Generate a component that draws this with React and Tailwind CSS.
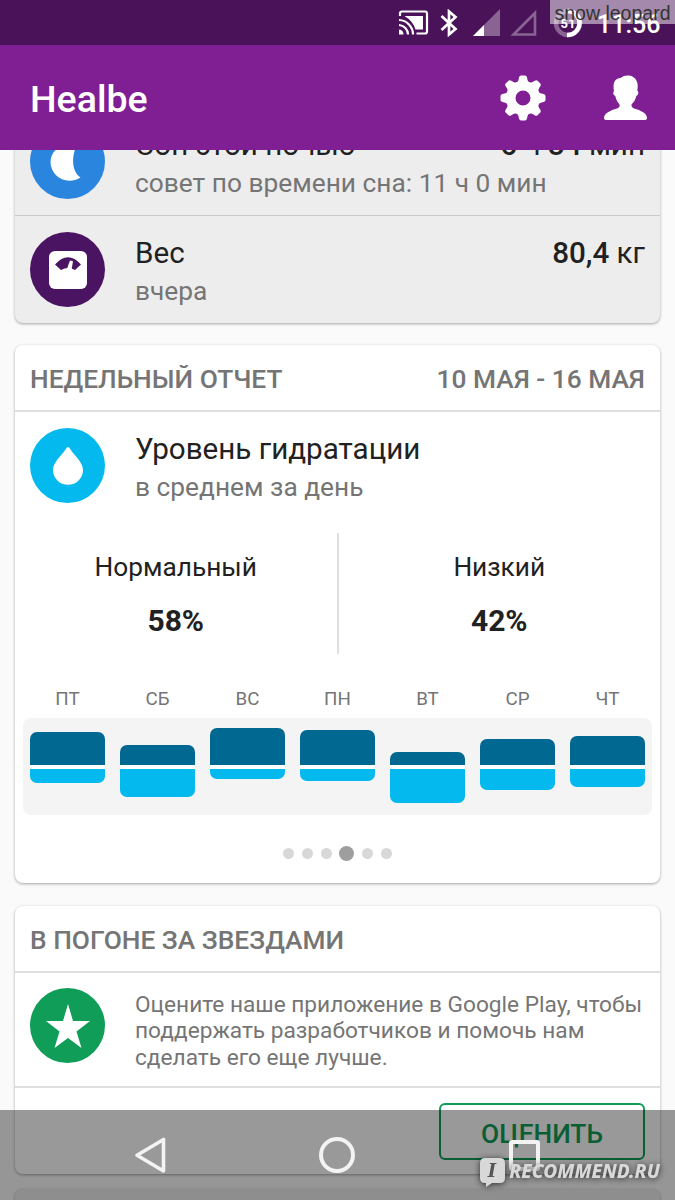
import React from "react";

const days = [
    {name: "ПТ", top: 33, bottom: 14},
    {name: "СБ", top: 20, bottom: 28},
    {name: "ВС", top: 37, bottom: 10},
    {name: "ПН", top: 35, bottom: 12},
    {name: "ВТ", top: 13, bottom: 34},
    {name: "СР", top: 26, bottom: 21},
    {name: "ЧТ", top: 29, bottom: 18},
]

const StatusBar = () => (
    <div className="relative h-[45px] shrink-0 bg-[#4a1259] flex items-center text-white">
        {/* cast */}
        <svg className="ml-[398px] w-[31px] h-[27px] shrink-0" viewBox="0 0 31 27" fill="none" stroke="currentColor" strokeWidth="2.2">
            <path d="M2 7V4.500Q2 2.500 4 2.500H27Q29 2.500 29 4.500V22.500Q29 24.500 27 24.500H18.500"/>
            <path d="M7 7h18v13.500h-7.500C15.500 14.500 12 10 7 7.500z" fill="currentColor" stroke="none"/>
            <path d="M1 11A14.500 14.500 0 0 1 15 25.500M1 16A9.500 9.500 0 0 1 10 25.500"/>
            <path d="M1 20.500A5 5 0 0 1 5.500 25.500H1z" fill="currentColor" stroke="none"/>
        </svg>
        {/* bluetooth */}
        <svg className="ml-[11px] w-[18px] h-[28px] shrink-0" viewBox="0 0 18 28" fill="none" stroke="currentColor" strokeWidth="2.7">
            <path d="M1.500 7l14 13L9 25.500v-23L15.500 8l-14 13"/>
        </svg>
        <svg className="ml-[15px] w-[28px] h-[28px] shrink-0" viewBox="0 0 28 28">
            <path d="M27 0v27H0z" fill="#fff" fillOpacity=".35"/>
            <path d="M11 16v11H0z" fill="#fff"/>
        </svg>
        <svg className="ml-[8px] w-[28px] h-[28px] shrink-0" viewBox="0 0 28 28">
            <path d="M26 4v21.500H4.500z" fill="none" stroke="#fff" strokeOpacity=".35" strokeWidth="2.600"/>
        </svg>
        <svg className="ml-[16px] w-[30px] h-[30px] shrink-0" viewBox="0 0 30 30">
            <circle cx="15" cy="15" r="12" fill="none" stroke="#fff" strokeOpacity=".35" strokeWidth="4.500"/>
            <path d="M15 3a12 12 0 1 1-1 24" fill="none" stroke="#fff" strokeWidth="4.500"/>
            <text x="15" y="20" textAnchor="middle" fontSize="13" fontWeight="700" fill="#fff">51</text>
        </svg>
        <span className="ml-[14px] mt-1 text-[25px] font-medium leading-8 whitespace-nowrap">11:56</span>
        {/* user name label */}
        <div className="absolute right-0 top-0 w-[125px] h-6 bg-white/50 text-[#333] text-[19.500px] leading-[26px] text-center whitespace-nowrap font-['Liberation_Sans',sans-serif]">
            snow leopard
        </div>
    </div>
)

const AppBar = () => (
    <div className="h-[105px] shrink-0 bg-[#7f1f93] flex items-center text-white pl-[30px]">
        <h1 className="flex-1 pt-0.5 text-[37.500px] font-medium leading-[44px]">Healbe</h1>
        <svg className="w-[46px] h-[46px]" viewBox="-23 -23 46 46" fill="currentColor">
            <path fillRule="evenodd" d="M-17 0a17 17 0 1 0 34 0a17 17 0 1 0-34 0zM-7.500 0a7.500 7.500 0 1 1 15 0a7.500 7.500 0 1 1-15 0z"/>
            {[0, 45, 90, 135, 180, 225, 270, 315].map(a => (
                <path key={a} transform={`rotate(${a})`} d="M-7.500-14.500Q-4.500-16-4-20.500Q-3.500-22.500-2-22.500H2Q3.500-22.500 4-20.500Q4.500-16 7.500-14.500z"/>
            ))}
        </svg>
        <svg className="ml-[57px] mr-[27px] w-[45px] h-[46px]" viewBox="0 0 45 46" fill="currentColor">
            <path d="M1 43C1 38 8 35.500 12.500 34Q17.500 32.500 16.500 29.500C14.500 27 13 24.500 12.300 21C10 20 9.600 17.500 11 16C9.500 8 12 3 17.500 3C20 .8 23 .2 26 .5C33 1.500 36 7.500 34.300 15.500C36 17 35.500 20 33.300 21C32.500 24.500 31 27 28.500 29.500Q28 32.500 32.500 34C37.500 35.500 44 38 44 43Q44 45 42 45H3Q1 45 1 43z"/>
        </svg>
    </div>
)

const Row = ({color, icon, title, subtitle, value}) => (
    <div className="flex h-[107px] px-[15px] pt-4">
        <div className={"size-[75px] shrink-0 rounded-full flex items-center justify-center " + color}>{icon}</div>
        <div className="ml-[30px] mt-[3px] flex-1 whitespace-nowrap">
            <div className="flex justify-between text-[29.600px] leading-9 text-[#212121]">
                <span>{title}</span>
                <span>{value}</span>
            </div>
            <div className="mt-1 text-[26.300px] leading-8 text-[#757575]">{subtitle}</div>
        </div>
    </div>
)

const CardHeader = ({title, right}) => (
    <div className="flex h-[67px] items-center justify-between border-b-2 border-[#dfdfdf] px-[15px] pt-0.5 text-[26.300px] font-medium leading-8 text-[#757575] whitespace-nowrap">
        <span>{title}</span>
        <span>{right}</span>
    </div>
)

const Stat = ({label, value}) => (
    <div className="flex-1 text-center text-[#212121]">
        <div className="mt-[18px] text-[26.250px] leading-8">{label}</div>
        <div className="mt-5 text-[30px] font-bold leading-9">{value}</div>
    </div>
)

const NavBar = () => (
    <div className="absolute inset-x-0 bottom-0 h-[90px] bg-black/40 flex items-center text-[#f3f3f3]">
        <svg className="ml-[134px] w-8 h-[37px]" viewBox="0 0 32 37" fill="none" stroke="currentColor" strokeWidth="3.600" strokeLinejoin="round">
            <path d="M29.500 2.500v31.500L3 18.200z"/>
        </svg>
        <div className="ml-[153px] size-9 rounded-full border-4 border-current"></div>
        <div className="ml-[154px] size-[31px] rounded-[3px] border-4 border-current"></div>
        {/* site logo */}
        <div className="absolute right-[15px] bottom-3 flex items-center text-[#d8d8d8] drop-shadow-[0_1px_3px_rgba(0,0,0,0.7)]">
            <svg className="w-[27px] h-[31px]" viewBox="0 0 27 31">
                <path d="M6 1h15q5 0 5 5v15q0 5-5 5h-8l-6 4v-4H6q-5 0-5-5V6q0-5 5-5z" fill="currentColor"/>
                <text x="13" y="20" textAnchor="middle" fontSize="18" fontWeight="700" fontStyle="italic" fontFamily="DejaVu Serif" fill="#555">I</text>
            </svg>
            <span className="ml-[3px] mb-[3px] text-[19.100px] leading-6 font-extrabold italic whitespace-nowrap font-['Noto_Sans',sans-serif]">RECOMMEND.RU</span>
        </div>
    </div>
)

const MoonIcon = () => (
    <svg className="w-[38px] h-[40px]" viewBox="0 0 38 40">
        <path d="M28 1.500C12 0 1.500 9 1.500 20C1.500 34 17 44 31.500 35.500C25 31 20.500 20 28 1.500z" fill="#fff"/>
    </svg>
)

const ScaleIcon = () => (
    <svg className="w-[38px] h-[38px]" viewBox="0 0 38 38">
        <rect width="38" height="38" rx="6" fill="#fff"/>
        <path d="M6 13.500Q19-1 32 13.500L26 19Q19 15 12 19z" fill="#4a1463"/>
        <path d="M17.500 19L21 9.500l3 .8L22.500 19z" fill="#fff"/>
    </svg>
)

const DropIcon = () => (
    <svg className="w-[30px] h-[38px]" viewBox="0 0 30 38">
        <path d="M15 0Q13.800 0 13 1.800C9 8.500 0 15 0 23a15 14.700 0 0 0 30 0C30 15 21 8.500 17 1.800Q16.200 0 15 0z" fill="#fff"/>
    </svg>
)

const StarIcon = () => (
    <svg className="w-[44px] h-[44px]" viewBox="0 0 44 44">
        <path d="M22 0l5 17h17L30.500 27.500 35.500 44 22 34 8.500 44l5-16.500L0 17h17z" fill="#fff"/>
    </svg>
)

const App = () => {
    return (
        <div className="relative flex h-[1200px] w-[675px] flex-col overflow-hidden bg-[#fafafa] font-['Roboto',sans-serif]">
            <StatusBar/>
            <AppBar/>

            <div className="flex-1 overflow-hidden px-[15px]">
                {/* scrolled under the app bar */}
                <div className="-mt-[42px] rounded-b-lg bg-[#ededed] shadow-[0_1px_3px_rgba(0,0,0,0.35)]">
                    <Row color="bg-[#2a85df]" icon={<MoonIcon/>} title="Сон этой ночью"
                         subtitle="совет по времени сна: 11 ч 0 мин"
                         value={<><b className="font-medium">6</b> ч <b className="font-medium">34</b> мин</>}/>
                    <div className="border-t border-[#cacaca]">
                        <Row color="bg-[#4a1463]" icon={<ScaleIcon/>} title="Вес" subtitle="вчера"
                             value={<><b className="font-medium">80,4</b> кг</>}/>
                    </div>
                </div>

                <div className="mt-[22px] h-[538px] rounded-lg bg-white shadow-[0_1px_3px_rgba(0,0,0,0.35)]">
                    <CardHeader title="НЕДЕЛЬНЫЙ ОТЧЕТ" right="10 МАЯ - 16 МАЯ"/>
                    <Row color="bg-[#03b9ee]" icon={<DropIcon/>} title="Уровень гидратации" subtitle="в среднем за день"/>

                    <div className="mt-3.5 flex h-[121px]">
                        <Stat label="Нормальный" value="58%"/>
                        <div className="w-0.5 bg-[#dfdfdf]"></div>
                        <Stat label="Низкий" value="42%"/>
                    </div>

                    {/* weekly chart */}
                    <div className="mt-[33px] flex gap-[15px] px-[15px] text-[18.750px] leading-6 text-[#757575]">
                        {days.map(d => <div key={d.name} className="w-[75px] text-center">{d.name}</div>)}
                    </div>
                    <div className="mx-2 mt-[7px] flex h-[97px] gap-[15px] rounded-lg bg-[#f4f4f4] px-[7px]">
                        {days.map(d => (
                            <div key={d.name} className="w-[75px] shrink-0">
                                <div className="flex h-[47px] items-end">
                                    <div className="w-full rounded-t-[7px] bg-[#006891]" style={{height: d.top}}></div>
                                </div>
                                <div className="h-1 bg-white"></div>
                                <div className="rounded-b-[7px] bg-[#03b9ee]" style={{height: d.bottom}}></div>
                            </div>
                        ))}
                    </div>

                    <div className="mt-[31px] flex items-center justify-center gap-[7.700px]">
                        {[0, 1, 2, 3, 4, 5].map(i => (
                            <div key={i} className={i === 3 ? "size-[15px] rounded-full bg-[#9e9e9e]" : "size-[11px] rounded-full bg-[#d8d8d8]"}></div>
                        ))}
                    </div>
                </div>

                <div className="mt-[23px] h-[268px] rounded-lg bg-white shadow-[0_1px_3px_rgba(0,0,0,0.35)]">
                    <CardHeader title="В ПОГОНЕ ЗА ЗВЕЗДАМИ"/>
                    <div className="flex h-[115px] border-b-2 border-[#dfdfdf] px-[15px] pt-[15px]">
                        <div className="size-[75px] shrink-0 rounded-full bg-[#0f9d58] flex items-center justify-center">
                            <StarIcon/>
                        </div>
                        <div className="ml-[30px] mt-1 text-[22.680px] leading-[26.250px] text-[#757575] whitespace-nowrap">
                            Оцените наше приложение в Google Play, чтобы<br/>
                            поддержать разработчиков и помочь нам<br/>
                            сделать его еще лучше.
                        </div>
                    </div>
                    <div className="flex justify-end px-[15px] pt-[15px]">
                        <button className="h-[57px] w-[206px] rounded-md border-2 border-[#0f9d58] pt-1.5 text-[26.250px] font-medium text-[#0f9d58]">
                            ОЦЕНИТЬ
                        </button>
                    </div>
                </div>

                <div className="mt-[15px] h-[60px] rounded-lg bg-[#ededed] shadow-[0_1px_3px_rgba(0,0,0,0.35)]"></div>
            </div>

            <NavBar/>
        </div>
    );
};

export default App;
